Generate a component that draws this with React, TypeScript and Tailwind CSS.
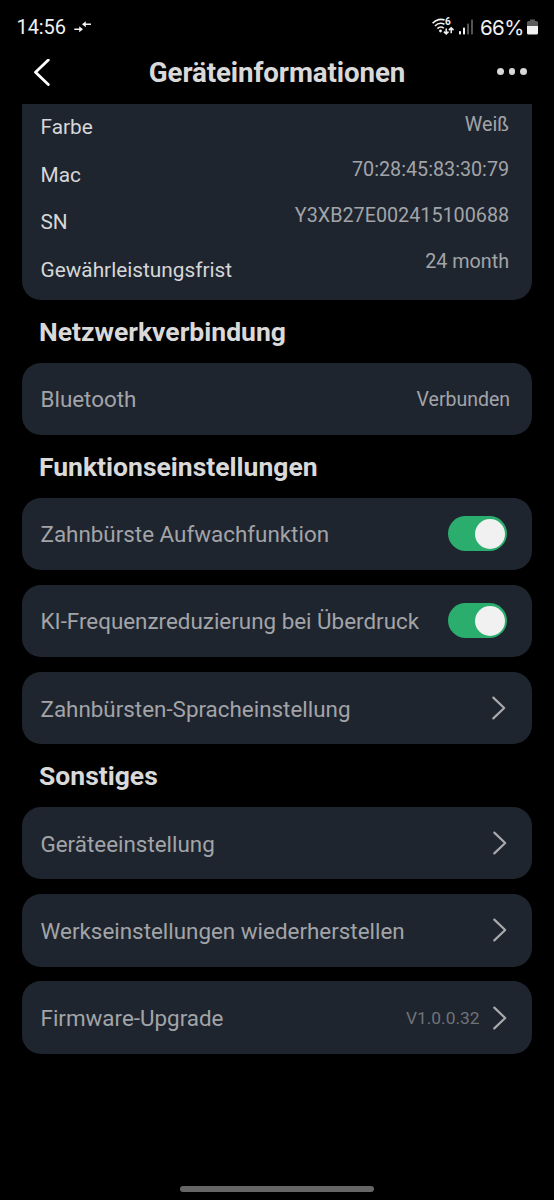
import React, { useState } from 'react'
import clsx from 'clsx'

const deviceInfo = [
  { label: 'Farbe', value: 'Weiß' },
  { label: 'Mac', value: '70:28:45:83:30:79' },
  { label: 'SN', value: 'Y3XB27E002415100688' },
  { label: 'Gewährleistungsfrist', value: '24 month' },
]

function StatusBar() {
  return (
    <div className="flex h-[42px] shrink-0 items-center justify-between pt-[12px] pl-[16.5px] pr-[16px] text-[20px] leading-[30px] text-[#f2f2f2]">
      <div className="flex items-center">
        <span className="w-[50px] tracking-[-0.1px]">14:56</span>
        <svg className="ml-[7.5px]" width="18" height="14" viewBox="0 0 18 14" fill="none" stroke="currentColor" strokeWidth="1.5">
          <path d="M0.3 9.3H6M17 4.3H11" />
          <path d="M5.2 6.3L9 9.3L5.2 12.3ZM11.8 1.3L8 4.3L11.8 7.3Z" fill="currentColor" stroke="none" />
        </svg>
      </div>
      <div className="flex items-center">
        {/* Wi-Fi 6 with traffic arrows */}
        <span className="relative">
          <svg width="23" height="18" viewBox="0 0 23 18" fill="none" stroke="currentColor" strokeWidth="1.6">
            <path d="M0.6 5.2C4.1 1.3 9.3 0.6 12.6 2.1M3 8C5.6 5.2 9.3 4.7 12.5 6.2M5.4 10.6C7.2 8.8 9.8 8.7 11.8 10.2" />
            <circle cx="8.5" cy="13" r="1.4" fill="currentColor" stroke="none" />
            <path d="M14.2 10.6V15.8M11.9 13.6L14.2 15.9L16.5 13.6M19.2 15.2V10M16.9 12.1L19.2 9.8L21.5 12.1" strokeWidth="1.5" />
          </svg>
          <span className="absolute top-[-1px] left-[13px] text-[10px] leading-[10px] font-bold">6</span>
        </span>
        <svg className="ml-[4px]" width="15" height="16" viewBox="0 0 15 16" fill="currentColor">
          <rect x="0" y="12" width="2" height="3.5" rx="0.7" />
          <rect x="4" y="8.5" width="2" height="7" rx="0.7" />
          <rect x="8" y="4.5" width="2" height="11" rx="0.7" opacity="0.35" />
          <rect x="12" y="0.5" width="2" height="15" rx="0.7" opacity="0.35" />
        </svg>
        <span className="ml-[6px] w-[45px] pt-[1px] font-['Inter'] text-[20.5px] tracking-[-0.6px]">66%</span>
        <svg className="ml-[2px]" width="11" height="16" viewBox="0 0 11 16" fill="currentColor">
          <path d="M3 0.5H8V2H9.5Q11 2 11 3.5V7H0V3.5Q0 2 1.5 2H3Z" fill="#5c5c5c" />
          <path d="M0 7H11V14Q11 15.5 9.5 15.5H1.5Q0 15.5 0 14Z" />
        </svg>
      </div>
    </div>
  )
}

function Header() {
  return (
    <header className="flex h-[62px] shrink-0 items-center justify-between pr-[27px] pl-[33px]">
      <button className="w-[32px] text-white" aria-label="Zurück">
        <svg width="18" height="28" viewBox="0 0 18 28" fill="none" stroke="currentColor" strokeWidth="2.8" strokeLinecap="round" strokeLinejoin="round">
          <path d="M15.3 1L2.5 13.3L15.3 25.5" />
        </svg>
      </button>
      <h1 className="-ml-[6px] text-[27.7px] leading-[32px] font-bold tracking-[-0.1px] whitespace-nowrap text-[#d9d9d9]">
        Geräteinformationen
      </h1>
      <button className="flex w-[32px] items-center justify-end gap-[5.1px] pb-[3px]" aria-label="Mehr">
        <i className="size-[6.6px] shrink-0 rounded-full bg-[#d9d9d9]" />
        <i className="size-[6.6px] shrink-0 rounded-full bg-[#d9d9d9]" />
        <i className="size-[6.6px] shrink-0 rounded-full bg-[#d9d9d9]" />
      </button>
    </header>
  )
}

function SectionTitle({ children }: { children: React.ReactNode }) {
  return <h2 className="flex h-[62.6px] items-center pl-[17px] pt-[1.4px] text-[26.5px] leading-[32px] font-bold text-[#d9d9d9]">{children}</h2>
}

function Row({ label, children }: { label: string; children: React.ReactNode }) {
  return (
    <div className="flex h-[72.4px] items-center justify-between rounded-[19px] bg-[#1f252f] pr-[24.5px] pl-[18.5px]">
      <span className="pt-[0.8px] text-[22.4px] leading-[34px] whitespace-nowrap text-[#a2a4a8]">{label}</span>
      {children}
    </div>
  )
}

function Toggle({ label }: { label: string }) {
  const [on, setOn] = useState(true)
  return (
    <button
      role="switch"
      aria-checked={on}
      aria-label={label}
      onClick={() => setOn(!on)}
      className={clsx(
        'flex h-[35px] w-[59px] shrink-0 items-center rounded-full px-[2px] transition-colors',
        on ? 'justify-end bg-[#2bad6d]' : 'justify-start bg-[#4b5563]',
      )}
    >
      <span className="size-[30.5px] rounded-full bg-[#f1f1f1]" />
    </button>
  )
}

function Chevron({ className }: { className?: string }) {
  return (
    <svg
      className={clsx('shrink-0', className)}
      width="15"
      height="24"
      viewBox="0 0 15 24"
      fill="none"
      stroke="#a8a9ab"
      strokeWidth="2.2"
      strokeLinecap="round"
      strokeLinejoin="round"
    >
      <path d="M2.3 1.6L13.2 12L2.3 22.4" />
    </svg>
  )
}

export default function App() {
  return (
    <div className="flex h-[1200px] w-[554px] flex-col overflow-hidden bg-black font-['Roboto',sans-serif]">
      <StatusBar />
      <Header />

      <main className="flex-1 pr-[22.4px] pl-[22px]">
        {/* Device details, scrolled under the header */}
        <section className="flex h-[196px] justify-between overflow-hidden rounded-b-[19px] bg-[#1f252f] pr-[22.5px] pl-[18.5px]">
          <div className="text-[20.8px] leading-[47.7px] text-[#d6d7d8]">
            {deviceInfo.map((item) => (
              <div key={item.label}>{item.label}</div>
            ))}
          </div>
          <div className="-mt-[2.3px] text-right text-[19.75px] leading-[45.7px] text-[#a2a4a8]">
            {deviceInfo.map((item) => (
              <div key={item.label}>{item.value}</div>
            ))}
          </div>
        </section>

        <SectionTitle>Netzwerkverbindung</SectionTitle>
        <Row label="Bluetooth">
          <span className="-mr-[3px] pt-[1.5px] text-[19.5px] leading-[30px] text-[#a2a4a8]">Verbunden</span>
        </Row>

        <SectionTitle>Funktionseinstellungen</SectionTitle>
        <div className="flex flex-col gap-[14.8px]">
          <Row label="Zahnbürste Aufwachfunktion">
            <Toggle label="Zahnbürste Aufwachfunktion" />
          </Row>
          <Row label="KI-Frequenzreduzierung bei Überdruck">
            <Toggle label="KI-Frequenzreduzierung bei Überdruck" />
          </Row>
          <Row label="Zahnbürsten-Spracheinstellung">
            <Chevron className="mr-[1.5px]" />
          </Row>
        </div>

        <SectionTitle>Sonstiges</SectionTitle>
        <div className="flex flex-col gap-[14.8px]">
          <Row label="Geräteeinstellung">
            <Chevron className="mr-[0.5px]" />
          </Row>
          <Row label="Werkseinstellungen wiederherstellen">
            <Chevron className="mr-[0.5px]" />
          </Row>
          <Row label="Firmware-Upgrade">
            <div className="flex items-center gap-[12px]">
              <span className="pt-[1px] text-[17.4px] text-[#6f7378]">V1.0.0.32</span>
              <Chevron className="mr-[0.5px]" />
            </div>
          </Row>
        </div>
      </main>

      <div className="mb-[8px] h-[6px] w-[194px] shrink-0 self-center rounded-full bg-[#666666]" />
    </div>
  )
}
